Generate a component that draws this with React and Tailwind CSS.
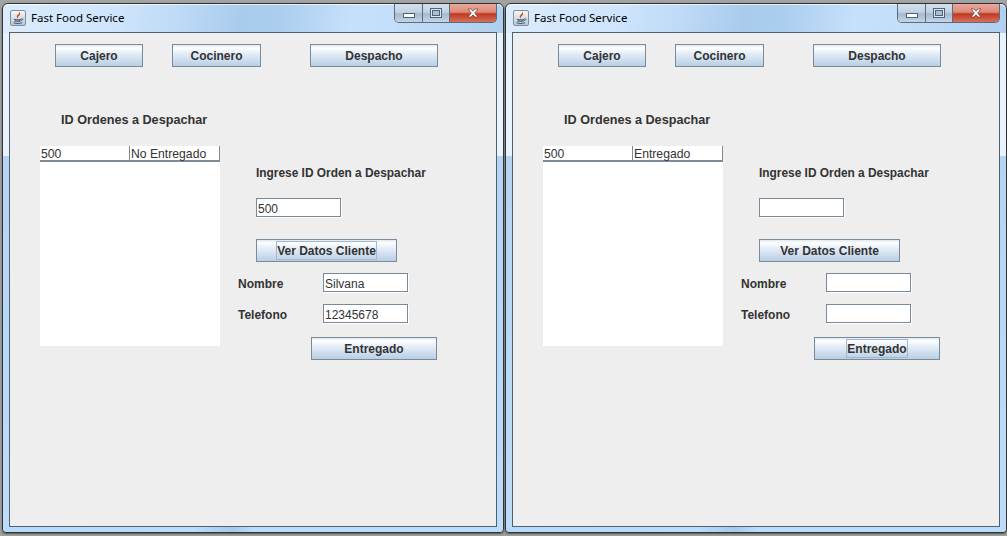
const font = "font-['Liberation_Sans',Arial,sans-serif]";

function JButton({ width, focused, children }) {
  return (
    <div className={`${width} h-[23px] shrink-0 flex items-center justify-center border border-[#7a8a99] bg-[linear-gradient(180deg,#dfe9f3_0%,#ffffff_14%,#e8f0f9_35%,#b8cfe5_100%)] text-[12px] font-bold text-[#333333]`}>
      {focused ? (
        <span className="h-[19px] flex items-center border border-[#a3b8cc]">{children}</span>
      ) : (
        children
      )}
    </div>
  );
}

function Field({ children, className = "" }) {
  return (
    <div className={`w-[85px] h-[19px] shrink-0 bg-white border border-[#7a8a99] shadow-[1px_1px_0_#ffffff] pl-[1px] text-[12px] leading-[21px] overflow-hidden text-[#333333] ${className}`}>
      {children}
    </div>
  );
}

function JavaIcon() {
  return (
    <div className="w-[16px] h-[16px] rounded-[2px] border border-[#7f8d9b] bg-[linear-gradient(180deg,#f4f6f8,#bcc6d0)] flex items-center justify-center">
      <svg width="14" height="14" viewBox="0 0 14 14" fill="none">
        <path d="M8 .6C9.200 2.800 5.300 4 5.800 6.200c.2.800 1.200 1.200 1.200 1.200-.5-1.100.3-2 1.400-2.900C9.400 3.700 9.600 2.400 8 .6z" fill="#d8501a" />
        <path d="M3 8.200c1.800.6 5.500.6 7.500 0M3.500 9.900c1.500.4 4.500.4 6 0M2.500 11.800c2 .7 6.500.7 8.500 0" stroke="#3f5f80" strokeWidth="1.100" />
        <path d="M10.500 7.600c1.900-.4 2 1.700-.7 2.200" stroke="#3f5f80" strokeWidth=".9" />
      </svg>
    </div>
  );
}

function Caption() {
  return (
    <div className="flex h-[19px] w-[103px] ml-auto rounded-b-[5px] border border-t-0 border-[#5b6b7c] overflow-hidden">
      <div className="w-[28px] h-full border-r border-[#5b6b7c] bg-[linear-gradient(180deg,#d3dfeb_0%,#c2d2e3_45%,#a5b9ce_55%,#c4d5e6_100%)] flex items-center justify-center">
        <div className="w-[12px] h-[5px] mt-[5px] bg-white border border-[#4f6479]" />
      </div>
      <div className="w-[27px] h-full border-r border-[#5b6b7c] bg-[linear-gradient(180deg,#d3dfeb_0%,#c2d2e3_45%,#a5b9ce_55%,#c4d5e6_100%)] flex items-center justify-center">
        <div className="w-[12px] h-[10px] border border-[#4f6479] bg-[#dbe6f1] flex items-center justify-center">
          <div className="w-[8px] h-[6px] border border-[#4f6479] bg-[#a9bfd4]" />
        </div>
      </div>
      <div className="flex-1 h-full bg-[linear-gradient(180deg,#e9a99b_0%,#dd8a78_45%,#bd3a22_55%,#d8705a_100%)] flex items-center justify-center">
        <svg width="14" height="10" viewBox="0 0 14 10">
          <path d="M2 1h3l2 2.200L9 1h3L8.700 5 12 9H9L7 6.800 5 9H2l3.300-4z" fill="#ffffff" stroke="#6b3a32" strokeWidth=".7" />
        </svg>
      </div>
    </div>
  );
}

function Window({ status, inputValue, name, phone, focusVer, focusEntregado }) {
  return (
    <div className="relative w-[502px] h-[530px] shrink-0 flex flex-col rounded-t-[6px] rounded-b-[4px] border border-[#2f3336] bg-[linear-gradient(180deg,#e6f2fd_0%,#e8f3fe_28.700%,#b5d4f4_28.800%,#bcdcfa_100%)] px-[6px] pb-[5px] shadow-[0_1px_2px_#555555]">
      <div className="absolute inset-x-0 top-0 h-[29px] rounded-t-[6px] border-t border-white/70 bg-[linear-gradient(100deg,#dbecfc_0%,#cfe5fb_22%,#bedaf6_35%,#a9cbec_48%,#abcdee_55%,#c6e1fb_70%,#c2def9_78%,#aecfee_100%)]" />
      <div className="absolute inset-x-0 bottom-0 h-[5px] rounded-b-[4px] bg-[linear-gradient(90deg,#b8d9fa_0%,#bcdcfb_38%,#a6c9ec_46%,#bcdcfb_50%,#bcdcfb_100%)]" />
      <div className="relative h-[28px] flex items-start shrink-0">
        <div className="flex items-center gap-[5px] pl-[1px] pt-[6px]">
          <JavaIcon />
          <span className="font-['Noto_Sans','Open_Sans',sans-serif] text-[11.500px] leading-[16px] text-black">Fast Food Service</span>
        </div>
        <Caption />
      </div>
      <div className="relative flex-1 border border-[#4f6071] bg-[#eeeeee]">
        <div className="pl-[30px] pt-[11px]">
          <div className="flex ml-[15px]">
            <JButton width="w-[88px]">Cajero</JButton>
            <div className="ml-[29px]"><JButton width="w-[89px]">Cocinero</JButton></div>
            <div className="ml-[49px]"><JButton width="w-[128px]">Despacho</JButton></div>
          </div>
          <div className="mt-[45px] ml-[21px] h-[15px] text-[12.650px] leading-[16px] font-bold text-[#333333] whitespace-nowrap">ID Ordenes a Despachar</div>
          <div className="mt-[19px] flex">
            <div className="w-[180px] h-[200px] shrink-0 bg-white">
              <div className="flex h-[16px] border-b-2 border-[#7f8a94] text-[12.200px] leading-[16px] text-[#333333]">
                <div className="w-[90px] border-r border-[#7f8a94] pl-[1px]">500</div>
                <div className="flex-1 border-r border-[#7f8a94] pl-[1px]">{status}</div>
              </div>
            </div>
            <div className="ml-[18px] w-[200px]">
              <div className="mt-[20px] ml-[18px] h-[14px] text-[11.900px] leading-[14px] font-bold text-[#333333] whitespace-nowrap">Ingrese ID Orden a Despachar</div>
              <div className="mt-[18px] ml-[18px]"><Field>{inputValue}</Field></div>
              <div className="mt-[22px] ml-[18px]"><JButton width="w-[141px]" focused={focusVer}>Ver Datos Cliente</JButton></div>
              <div className="mt-[11px] flex">
                <div className="w-[85px] h-[19px] leading-[23px] text-[12px] font-bold text-[#333333]">Nombre</div>
                <Field>{name}</Field>
              </div>
              <div className="mt-[12px] flex">
                <div className="w-[85px] h-[19px] leading-[23px] text-[12px] font-bold text-[#333333]">Telefono</div>
                <Field>{phone}</Field>
              </div>
              <div className="mt-[14px] ml-[73px]"><JButton width="w-[126px]" focused={focusEntregado}>Entregado</JButton></div>
            </div>
          </div>
        </div>
      </div>
    </div>
  );
}

export default function App() {
  return (
    <div className={`${font} w-[1007px] h-[536px] overflow-hidden flex gap-[1px] pl-[2px] pt-[3px] bg-[#a3a3a3]`}>
      <Window status="No Entregado" inputValue="500" name="Silvana" phone="12345678" focusVer />
      <Window status="Entregado" inputValue="" name="" phone="" focusEntregado />
    </div>
  );
}
